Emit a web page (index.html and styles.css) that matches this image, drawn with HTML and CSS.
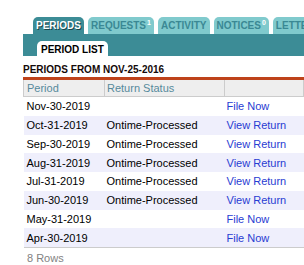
FILE: index.html
```html
<!DOCTYPE html>
<html>

<head>
    <meta charset="utf-8">
    <title>Periods</title>
    <meta name="viewport" content="width=device-width">
    <link rel="stylesheet" href="styles.css">
</head>

<body>
    <div class="page">
        <ul class="tabs">
            <li class="tab active">PERIODS</li>
            <li class="tab">REQUESTS<sup>1</sup></li>
            <li class="tab">ACTIVITY</li>
            <li class="tab">NOTICES<sup>0</sup></li>
            <li class="tab">LETTERS</li>
        </ul>
        <div class="subbar"><span class="subtab">PERIOD LIST</span></div>

        <h2 class="heading">PERIODS FROM NOV-25-2016</h2>

        <table class="periods">
            <thead>
                <tr>
                    <th class="col-period">Period</th>
                    <th class="col-status">Return Status</th>
                    <th></th>
                </tr>
            </thead>
            <tbody>
                <tr>
                    <td>Nov-30-2019</td>
                    <td></td>
                    <td><a href="#">File Now</a></td>
                </tr>
                <tr>
                    <td>Oct-31-2019</td>
                    <td>Ontime-Processed</td>
                    <td><a href="#">View Return</a></td>
                </tr>
                <tr>
                    <td>Sep-30-2019</td>
                    <td>Ontime-Processed</td>
                    <td><a href="#">View Return</a></td>
                </tr>
                <tr>
                    <td>Aug-31-2019</td>
                    <td>Ontime-Processed</td>
                    <td><a href="#">View Return</a></td>
                </tr>
                <tr>
                    <td>Jul-31-2019</td>
                    <td>Ontime-Processed</td>
                    <td><a href="#">View Return</a></td>
                </tr>
                <tr>
                    <td>Jun-30-2019</td>
                    <td>Ontime-Processed</td>
                    <td><a href="#">View Return</a></td>
                </tr>
                <tr>
                    <td>May-31-2019</td>
                    <td></td>
                    <td><a href="#">File Now</a></td>
                </tr>
                <tr>
                    <td>Apr-30-2019</td>
                    <td></td>
                    <td><a href="#">File Now</a></td>
                </tr>
            </tbody>
        </table>

        <div class="count">8 Rows</div>
    </div>
</body>

</html>
```

FILE: styles.css
```css
html,
body {
    margin: 0;
    overflow: hidden;
    background-color: white;
    font-family: 'Liberation Sans', Arial, Helvetica, sans-serif;
}

.page {
    padding-left: 23px;
}

.tabs {
    display: flex;
    gap: 4px;
    margin: 17px 0 0;
    padding: 0 0 0 10px;
    list-style: none;
}

.tab {
    flex-shrink: 0;
    height: 17px;
    padding: 0 3px;
    line-height: 18px;
    font-size: 10px;
    font-weight: bold;
    color: rgb(58, 136, 148);
    background-color: rgb(128, 202, 205);
    border-radius: 5px 5px 0 0;
}

.tab sup {
    margin-left: 1px;
    font-size: 7px;
    line-height: 0;
    color: white;
    vertical-align: 4px;
}

.tab.active {
    color: white;
    background-color: rgb(60, 140, 150);
    text-shadow: 1px 1px 0 rgb(25, 70, 76);
}

.subbar {
    height: 17px;
    padding: 5px 0 0 14px;
    background-color: rgb(60, 140, 150);
}

.subtab {
    display: inline-block;
    height: 17px;
    padding: 0 4px;
    line-height: 18px;
    font-size: 10px;
    font-weight: bold;
    color: black;
    background-color: white;
    border-radius: 5px 5px 0 0;
}

.heading {
    margin: 8px 0 0;
    padding-bottom: 1px;
    font-size: 10px;
    line-height: 12px;
    color: rgb(20, 10, 10);
    border-bottom: 3px solid rgb(190, 66, 26);
}

.periods {
    width: 100%;
    border-collapse: collapse;
    font-size: 11px;
    border-bottom: 1px solid rgb(204, 204, 204);
}

.periods th {
    height: 16px;
    padding: 0 2px;
    text-align: left;
    font-weight: normal;
    color: rgb(86, 138, 156);
    background-color: rgb(238, 238, 238);
    border: 1px solid rgb(204, 204, 204);
    border-top: none;
}

.col-period {
    width: 75px;
}

.col-status {
    width: 115px;
}

.periods td {
    height: 14.75px;
    padding: 2px 2px;
    line-height: 14px;
    color: black;
}

.periods th:first-child,
.periods td:first-child {
    padding-left: 3px;
}

.periods tbody tr:nth-child(even) td {
    background-color: rgb(239, 239, 252);
}

.periods a {
    color: rgb(40, 60, 210);
    text-decoration: none;
}

.count {
    padding: 4px 0 0 4px;
    font-size: 11px;
    color: rgb(130, 130, 130);
}
```
